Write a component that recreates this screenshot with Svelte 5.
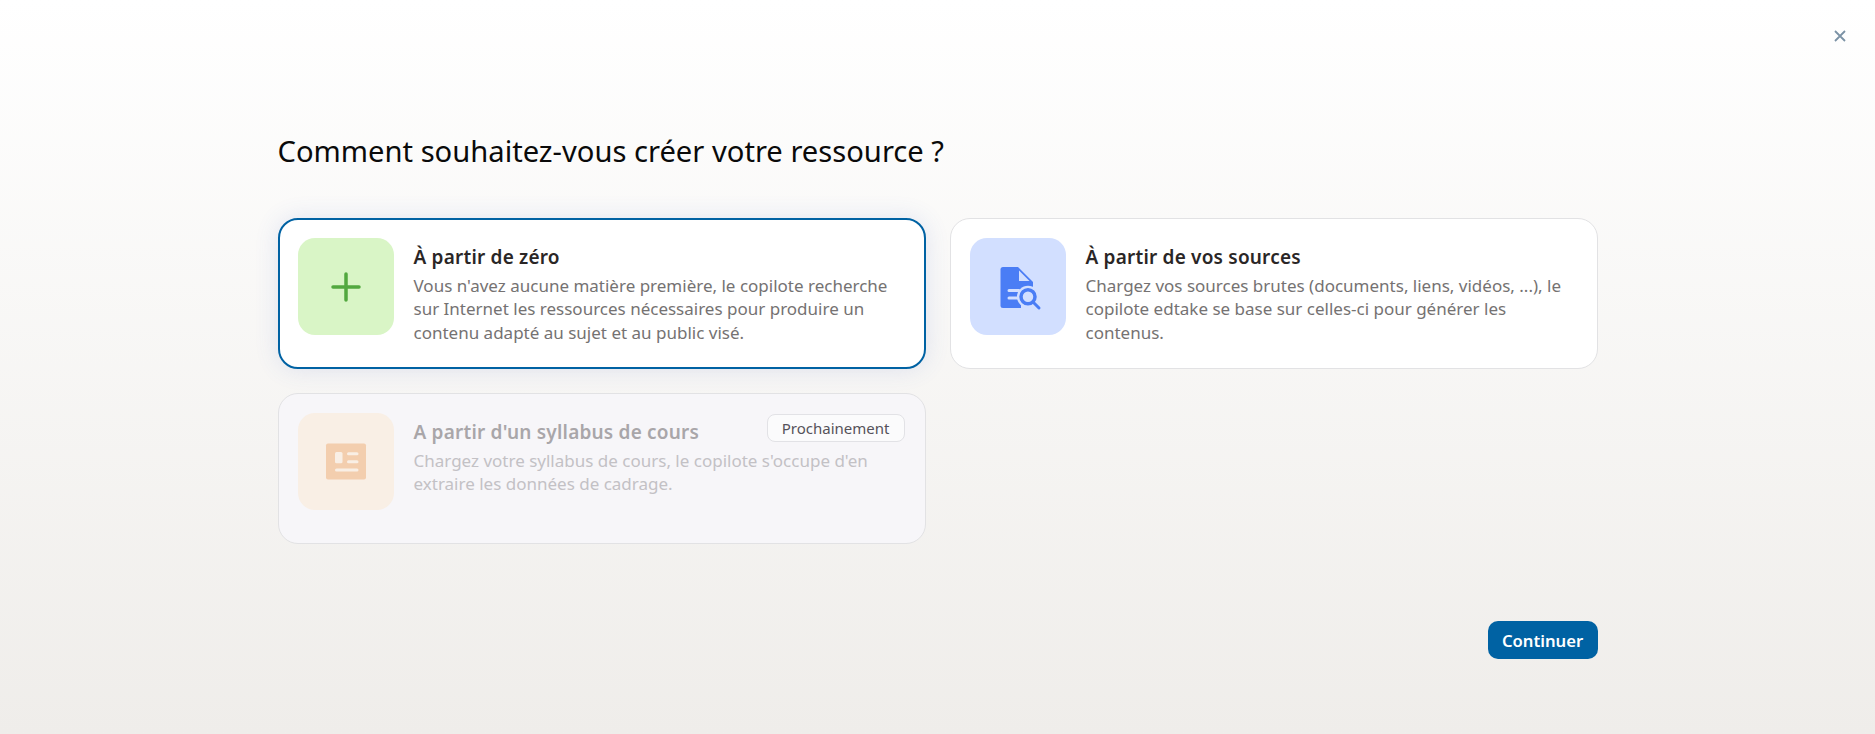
<script lang="ts">
  const cards = [
    {
      key: 'plus',
      title: 'À partir de zéro',
      text: "Vous n'avez aucune matière première, le copilote recherche sur Internet les ressources nécessaires pour produire un contenu adapté au sujet et au public visé.",
      selected: true
    },
    {
      key: 'sources',
      title: 'À partir de vos sources',
      text: 'Chargez vos sources brutes (documents, liens, vidéos, ...), le copilote edtake se base sur celles-ci pour générer les contenus.'
    },
    {
      key: 'syllabus',
      title: "A partir d'un syllabus de cours",
      text: "Chargez votre syllabus de cours, le copilote s'occupe d'en extraire les données de cadrage.",
      disabled: true
    }
  ];
</script>

<main class="page">
  <button class="close" aria-label="Fermer">
    <svg width="14" height="14" viewBox="0 0 14 14"><path d="M2 2l10 10M12 2L2 12" /></svg>
  </button>

  <div class="content">
    <h1>Comment souhaitez-vous créer votre ressource ?</h1>

    <div class="grid">
      {#each cards as card (card.key)}
        <div class="card" class:selected={card.selected} class:disabled={card.disabled}>
          <div class={`icon ${card.key}`}>
            {#if card.key === 'plus'}
              <svg width="48" height="48" viewBox="0 0 48 48"><path d="M24 11v26M11 24h26" stroke="#52a83f" stroke-width="3.500" stroke-linecap="round" fill="none" /></svg>
            {:else if card.key === 'sources'}
              <svg width="48" height="48" viewBox="0 0 48 48">
                <path d="M9 4h15l15 15v26H9a2.500 2.500 0 0 1-2.500-2.500v-36A2.500 2.500 0 0 1 9 4z" fill="#4a7df5" />
                <path d="M25 7.500L35.500 18H25z" fill="#d2dfff" />
                <path d="M15 27.500h10M15 35h10" stroke="#d2dfff" stroke-width="3" stroke-linecap="round" />
                <rect x="27" y="40" width="14" height="8" fill="#d2dfff" />
                <circle cx="34" cy="33.700" r="11" fill="#d2dfff" />
                <circle cx="34" cy="33.700" r="7" fill="none" stroke="#4a7df5" stroke-width="3.500" />
                <path d="M39.500 39.500l5.500 5.500" stroke="#4a7df5" stroke-width="3" stroke-linecap="round" />
              </svg>
            {:else}
              <svg width="48" height="48" viewBox="0 0 48 48">
                <rect x="4" y="5.500" width="40" height="36" rx="2" fill="#f3ceae" />
                <rect x="13" y="14" width="7.500" height="11.300" rx="1.500" fill="#f9efe5" />
                <path d="M26.500 15.700h8.500M26.500 23.700h8.500M14.500 32h20.500" stroke="#f9efe5" stroke-width="3" stroke-linecap="round" />
              </svg>
            {/if}
          </div>
          <div class="body">
            <h2>{card.title}</h2>
            <p>{card.text}</p>
          </div>
          {#if card.disabled}
            <span class="badge">Prochainement</span>
          {/if}
        </div>
      {/each}
    </div>

    <div class="actions">
      <button class="primary">Continuer</button>
    </div>
  </div>
</main>

<style>
  :global(body) {
    margin: 0;
    font-family: "Noto Sans", sans-serif;
  }

  .page {
    position: relative;
    box-sizing: border-box;
    height: 734px;
    overflow: hidden;
    background: linear-gradient(180deg, #ffffff 0%, #efedea 100%);
  }

  .close {
    position: absolute;
    top: 29px;
    right: 28px;
    display: flex;
    padding: 0;
    border: 0;
    background: none;
  }

  .close path {
    stroke: #7b92a5;
    stroke-width: 1.8;
    fill: none;
  }

  .content {
    width: 1320px;
    margin: 0 auto;
    padding-top: 131px;
  }

  h1 {
    margin: 0 0 46px;
    font-size: 29.170px;
    line-height: 41px;
    font-weight: 400;
    color: #0a0a0a;
  }

  .grid {
    display: grid;
    grid-template-columns: 1fr 1fr;
    gap: 24px;
  }

  .card {
    position: relative;
    box-sizing: border-box;
    display: flex;
    gap: 20px;
    height: 151px;
    padding: 19px;
    background: #ffffff;
    border: 1px solid #e2e2e4;
    border-radius: 20px;
  }

  .card.selected {
    padding: 18px;
    border: 2px solid #0062a3;
    box-shadow: 0 0 24px rgba(70, 100, 200, 0.14);
  }

  .card.disabled {
    background: #f7f6f9;
  }

  .icon {
    flex: 0 0 96px;
    height: 97px;
    display: flex;
    align-items: center;
    justify-content: center;
    border-radius: 17px;
  }

  .icon.plus {
    background: #d9f5c6;
  }

  .icon.sources {
    background: #d2dfff;
  }

  .icon.syllabus {
    background: #f9efe5;
  }

  .body {
    min-width: 0;
  }

  h2 {
    margin: 6px 0 3px;
    font-size: 19px;
    letter-spacing: 0.2px;
    line-height: 27px;
    font-weight: 600;
    color: #2a2626;
  }

  p {
    margin: 0;
    font-size: 17px;
    line-height: 23.330px;
    color: #757272;
  }

  .disabled h2 {
    color: #a9a6a9;
  }

  .disabled p {
    color: #c3c1c5;
  }

  .badge {
    position: absolute;
    top: 20px;
    right: 20px;
    box-sizing: border-box;
    height: 28px;
    padding: 0 14px;
    display: flex;
    align-items: center;
    font-size: 15px;
    color: #55525a;
    background: #fbfbfc;
    border: 1px solid #e2e2e6;
    border-radius: 8px;
  }

  .actions {
    display: flex;
    justify-content: flex-end;
    margin-top: 77px;
  }

  .primary {
    width: 110px;
    height: 38px;
    padding: 0;
    font-family: inherit;
    font-size: 16.670px;
    font-weight: 600;
    color: #ffffff;
    background: #0062a3;
    border: 0;
    border-radius: 10px;
  }
</style>
